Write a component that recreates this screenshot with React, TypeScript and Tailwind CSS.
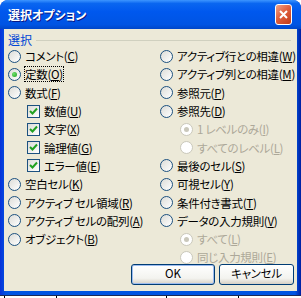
import React from 'react';

type Opt = {
  t: string;
  k: string;
  checked?: boolean;
  box?: boolean;
  sub?: boolean;
  disabled?: boolean;
  focus?: boolean;
};

const leftOpts: Opt[] = [
  { t: 'コメント', k: 'C' },
  { t: '定数', k: 'O', checked: true, focus: true },
  { t: '数式', k: 'F' },
  { t: '数値', k: 'U', box: true },
  { t: '文字', k: 'X', box: true },
  { t: '論理値', k: 'G', box: true },
  { t: 'エラー値', k: 'E', box: true },
  { t: '空白セル', k: 'K' },
  { t: 'アクティブ セル領域', k: 'R' },
  { t: 'アクティブ セルの配列', k: 'A' },
  { t: 'オブジェクト', k: 'B' },
];

const rightOpts: Opt[] = [
  { t: 'アクティブ行との相違', k: 'W' },
  { t: 'アクティブ列との相違', k: 'M' },
  { t: '参照元', k: 'P' },
  { t: '参照先', k: 'D' },
  { t: '1 レベルのみ', k: 'I', sub: true, disabled: true, checked: true },
  { t: 'すべてのレベル', k: 'L', sub: true, disabled: true },
  { t: '最後のセル', k: 'S' },
  { t: '可視セル', k: 'Y' },
  { t: '条件付き書式', k: 'T' },
  { t: 'データの入力規則', k: 'V' },
  { t: 'すべて', k: 'L', sub: true, disabled: true, checked: true },
  { t: '同じ入力規則', k: 'E', sub: true, disabled: true },
];

function Radio({ checked, disabled }: { checked?: boolean; disabled?: boolean }) {
  return (
    <span
      className={
        disabled
          ? 'w-[13px] h-[13px] shrink-0 rounded-full border border-[#CAC8BB] bg-white flex items-center justify-center'
          : 'w-[13px] h-[13px] shrink-0 rounded-full border border-[#1C5180] bg-[linear-gradient(135deg,#DCDCD7,#FFFFFF)] flex items-center justify-center'
      }
    >
      {checked && (
        <span
          className={
            disabled
              ? 'w-[5px] h-[5px] rounded-full bg-[#CAC8BB]'
              : 'w-[5px] h-[5px] rounded-full bg-[radial-gradient(circle_at_35%_35%,#6EE06A,#21A121)]'
          }
        />
      )}
    </span>
  );
}

function CheckBox() {
  return (
    <span className="w-[13px] h-[13px] shrink-0 border border-[#1C5180] bg-[linear-gradient(135deg,#DCDCD7,#FFFFFF)] flex items-center justify-center">
      <svg width="9" height="9" viewBox="0 0 9 9">
        <path d="M1 4 L3.5 6.5 L8 1.5" fill="none" stroke="#21A121" strokeWidth="2" />
      </svg>
    </span>
  );
}

function Row({ o }: { o: Opt }) {
  return (
    <div className={`h-[18.3px] flex items-center gap-[4px] ${o.box ? 'pl-[19px] gap-[3px]' : ''} ${o.sub ? 'pl-[20px]' : ''}`}>
      {o.box ? <CheckBox /> : <Radio checked={o.checked} disabled={o.disabled} />}
      <span
        className={`whitespace-nowrap text-[11.5px] leading-[14px] tracking-[-0.3px] ${o.disabled ? 'text-[#ACA899]' : 'text-black'} ${o.focus ? 'outline outline-1 outline-dotted outline-black' : ''}`}
      >
        {o.t}(<span className="underline underline-offset-1">{o.k}</span>)
      </span>
    </div>
  );
}

export default function App() {
  return (
    <div className="w-[301px] h-[298px] bg-white flex flex-col overflow-hidden font-['Noto_Sans_CJK_JP',sans-serif] [font-feature-settings:'palt'] text-[12px]">
      {/* window */}
      <div className="h-[295px] shrink-0 flex flex-col rounded-t-[8px] bg-[linear-gradient(90deg,#0831D9,#0054E3_2%,#0054E3_98%,#001EA0)]">
        {/* title bar */}
        <div className="h-[29px] shrink-0 rounded-t-[8px] bg-[linear-gradient(180deg,#3D95FF_0%,#0A66F0_12%,#0058EE_40%,#0054E3_85%,#0046C8_100%)] flex items-center justify-between pl-[8px] pr-[9px]">
          <span className="text-white font-bold text-[12px] [text-shadow:1px_1px_0_#0A1883]">選択オプション</span>
          <span className="w-[17px] h-[21px] rounded-[3px] border border-white bg-[linear-gradient(135deg,#F0A48A,#E0603E_45%,#C13A18)] flex items-center justify-center">
            <svg width="9" height="9" viewBox="0 0 9 9">
              <path d="M1 1 L8 8 M8 1 L1 8" stroke="white" strokeWidth="2" />
            </svg>
          </span>
        </div>
        {/* body */}
        <div className="flex-1 mx-[4px] mb-[4px] bg-[#ECE9D8] flex flex-col pt-[4px] pl-[4px]">
          <div className="h-[14px] flex items-center">
            <span className="text-[#0046D5] leading-[14px]">選択</span>
            <span className="flex-1 h-px bg-[#D0D0BF] ml-[4px] mr-[6px]" />
          </div>
          <div className="flex">
            <div className="w-[152px] flex flex-col">
              {leftOpts.map((o, i) => (
                <Row key={i} o={o} />
              ))}
            </div>
            <div className="flex-1 flex flex-col">
              {rightOpts.map((o, i) => (
                <Row key={i} o={o} />
              ))}
            </div>
          </div>
          <div className="mt-[-3px] flex justify-end gap-[4px] pr-[3px]">
            <button className="w-[84px] h-[21px] rounded-[3px] border border-[#003C74] bg-[linear-gradient(180deg,#FFFFFF,#F3F3EF_70%,#D6D0C5)] shadow-[inset_0_0_0_1px_#9DBCEF] text-black text-[11.5px] leading-none">
              OK
            </button>
            <button className="w-[75px] h-[21px] rounded-[3px] border border-[#003C74] bg-[linear-gradient(180deg,#FFFFFF,#F3F3EF_70%,#D6D0C5)] text-black text-[11.5px] leading-none tracking-[-0.3px]">
              キャンセル
            </button>
          </div>
        </div>
      </div>
      {/* sheet behind */}
      <div className="flex-1 border-t border-[#1A2A5A] bg-white flex">
        <span className="w-[5px] border-r border-black" />
        <span className="w-[52px] border-r border-black" />
        <span className="w-[110px] border-r border-black" />
        <span className="w-[72px] border-r border-black" />
      </div>
    </div>
  );
}
